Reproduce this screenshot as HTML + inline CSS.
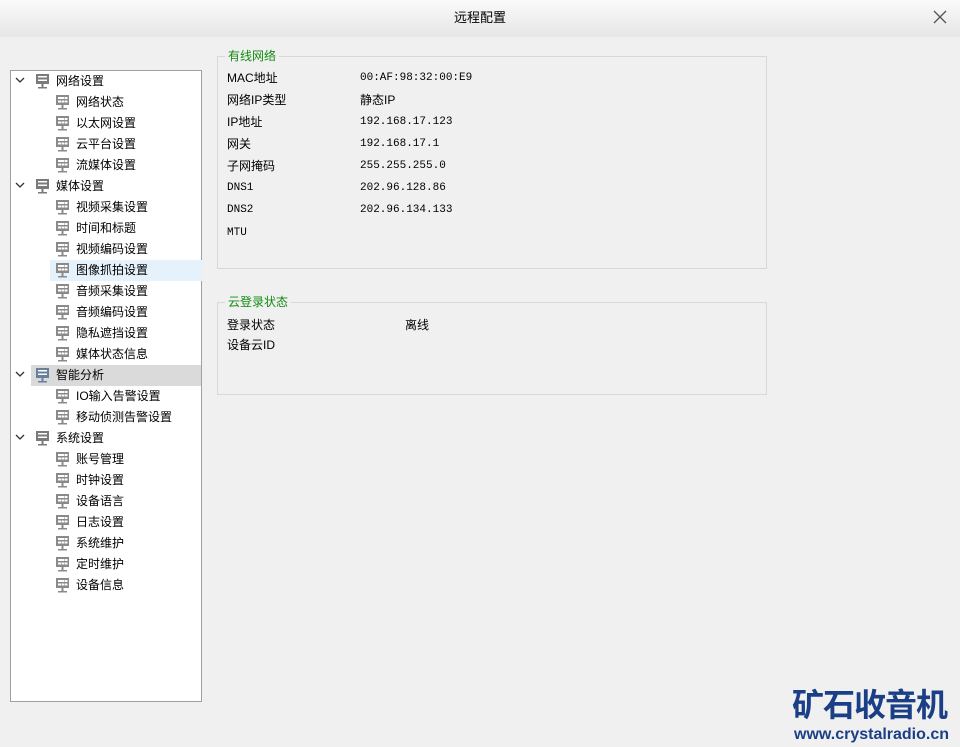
<!DOCTYPE html>
<html><head><meta charset="utf-8"><style>
*{margin:0;padding:0;box-sizing:border-box}
body{width:960px;height:747px;background:#f0f0f0;font-family:"Liberation Sans","Noto Sans CJK SC",sans-serif;font-size:12px;color:#000;position:relative;overflow:hidden}
.title{position:absolute;left:0;top:0;width:960px;height:37px;background:linear-gradient(#fafafa,#e6e6e6);text-align:center;line-height:36px;font-size:13px}
.close{position:absolute;right:12px;top:9px;width:16px;height:16px}
.tree{position:absolute;left:10px;top:70px;width:192px;height:632px;border:1px solid #a0a0a0;background:#fff}
.row{position:absolute;height:21px;line-height:21px;white-space:nowrap}
.row svg{position:absolute;top:3px}
.g{position:absolute;border:1px solid #d8d8d8}
.gt{position:absolute;top:-9px;left:7px;background:#f0f0f0;padding:0 3px;color:#138a13;font-size:12px;line-height:16px}
.t{position:absolute;font-size:12px;line-height:16px;white-space:nowrap}
.m{font-family:"Liberation Mono","Noto Sans CJK SC",monospace;font-size:11px}
.wm{position:absolute;left:792px;top:681px;color:#1a3f86;font-weight:bold;font-size:32px;letter-spacing:-1px;font-family:"Noto Sans CJK SC",sans-serif;line-height:44px}
.url{position:absolute;left:794px;top:725px;color:#1a3f86;font-weight:bold;font-size:16px;line-height:20px;font-family:"Liberation Sans",sans-serif}
</style></head><body>
<div class="title">远程配置</div>
<svg class="close" viewBox="0 0 16 16"><path d="M2 2L14 14M14 2L2 14" stroke="#555" stroke-width="1.3"/></svg>
<div class="tree">
<div class="row" style="left:20px;top:294px;width:170px;height:21px;background:#dadada"></div>
<div class="row" style="left:39px;top:189px;width:152px;height:21px;background:#e5f1fb"></div>
<div id="rows"></div>
</div>
<script>
var items=[[1,"网络设置"],[2,"网络状态"],[2,"以太网设置"],[2,"云平台设置"],[2,"流媒体设置"],[1,"媒体设置"],[2,"视频采集设置"],[2,"时间和标题"],[2,"视频编码设置"],[2,"图像抓拍设置"],[2,"音频采集设置"],[2,"音频编码设置"],[2,"隐私遮挡设置"],[2,"媒体状态信息"],[1,"智能分析"],[2,"IO输入告警设置"],[2,"移动侦测告警设置"],[1,"系统设置"],[2,"账号管理"],[2,"时钟设置"],[2,"设备语言"],[2,"日志设置"],[2,"系统维护"],[2,"定时维护"],[2,"设备信息"]];
var h="";
items.forEach(function(it,i){var y=i*21;
if(it[0]==1){var c=it[1]=="智能分析"?"#6a7f99":"#7a7a7a";
h+='<div class="row" style="left:4px;top:'+y+'px"><svg width="10" height="14" style="left:0;top:4px"><path d="M1 3L5 7L9 3" stroke="#333" stroke-width="1.3" fill="none"/></svg></div>';
h+='<div class="row" style="left:24px;top:'+y+'px;padding-left:21px"><svg width="15" height="16" style="left:0;top:2px"><rect x="1" y="1" width="13" height="10" fill="'+c+'"/><rect x="3" y="3" width="9" height="1.5" fill="#fff"/><rect x="3" y="6.5" width="9" height="1.5" fill="#fff"/><rect x="6.5" y="11" width="2" height="3" fill="'+c+'"/><rect x="3" y="14" width="9" height="1.5" fill="'+c+'"/></svg>'+it[1]+'</div>';}
else{h+='<div class="row" style="left:44px;top:'+y+'px;padding-left:21px"><svg width="15" height="16" style="left:0;top:2px"><rect x="1" y="1" width="13" height="10" fill="#8a8a8a"/><rect x="3" y="3" width="3" height="2" fill="#fff"/><rect x="6" y="3" width="3" height="2" fill="#fff"/><rect x="9.5" y="3" width="3" height="2" fill="#fff"/><rect x="3" y="6.5" width="3" height="2" fill="#fff"/><rect x="6.5" y="6.5" width="2.5" height="2" fill="#fff"/><rect x="9.5" y="6.5" width="3" height="2" fill="#fff"/><rect x="6.5" y="11" width="2" height="3" fill="#8a8a8a"/><rect x="3" y="14" width="9" height="1.5" fill="#8a8a8a"/></svg>'+it[1]+'</div>';}
});
document.getElementById("rows").innerHTML=h;
</script>
<div class="g" style="left:217px;top:56px;width:550px;height:213px"><div class="gt">有线网络</div></div>
<div class="t" style="left:227px;top:70px">MAC地址</div><div class="t m" style="left:360px;top:70px">00:AF:98:32:00:E9</div>
<div class="t" style="left:227px;top:92px">网络IP类型</div><div class="t" style="left:360px;top:92px">静态IP</div>
<div class="t" style="left:227px;top:114px">IP地址</div><div class="t m" style="left:360px;top:114px">192.168.17.123</div>
<div class="t" style="left:227px;top:136px">网关</div><div class="t m" style="left:360px;top:136px">192.168.17.1</div>
<div class="t" style="left:227px;top:158px">子网掩码</div><div class="t m" style="left:360px;top:158px">255.255.255.0</div>
<div class="t m" style="left:227px;top:180px">DNS1</div><div class="t m" style="left:360px;top:180px">202.96.128.86</div>
<div class="t m" style="left:227px;top:202px">DNS2</div><div class="t m" style="left:360px;top:202px">202.96.134.133</div>
<div class="t m" style="left:227px;top:225px">MTU</div>
<div class="g" style="left:217px;top:302px;width:550px;height:93px"><div class="gt">云登录状态</div></div>
<div class="t" style="left:227px;top:317px">登录状态</div><div class="t" style="left:405px;top:317px">离线</div>
<div class="t" style="left:227px;top:337px">设备云ID</div>
<div class="wm">矿石收音机</div>
<div class="url">www.crystalradio.cn</div>
</body></html>
